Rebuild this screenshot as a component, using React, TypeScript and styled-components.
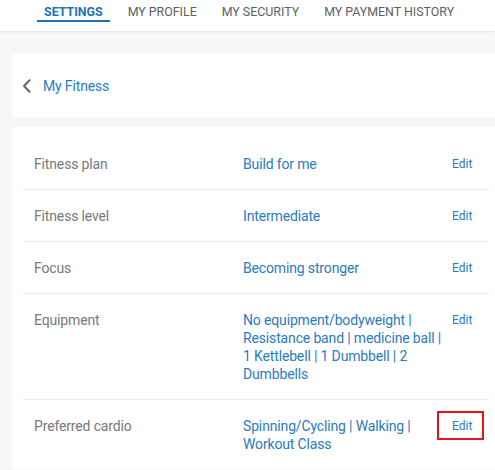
import React from "react";
import styled, { createGlobalStyle } from "styled-components";

const Global = createGlobalStyle`
  html, body { margin: 0; padding: 0; background: #f7f7f7; }
  body { font-family: Roboto, "Liberation Sans", Arial, sans-serif; -webkit-font-smoothing: antialiased; }
  * { box-sizing: border-box; }
`;

const Page = styled.div`
  min-height: 470px;
  background: #f7f7f7;
  overflow: hidden;
`;

const Nav = styled.nav`
  display: flex;
  gap: 11px;
  padding: 4px 0 9px 37px;
  background: #fff;
  border-bottom: 1px solid #e8e8e8;
  box-shadow: 0 1px 2px rgba(0, 0, 0, 0.04);
`;

const Tab = styled.a<{ $active?: boolean }>`
  display: block;
  padding: 0 7px;
  font-size: 12.4px;
  line-height: 16px;
  text-transform: uppercase;
  white-space: nowrap;
  color: ${(p) => (p.$active ? "#1f72b6" : "#5b5f63")};
  font-weight: ${(p) => (p.$active ? 700 : 400)};
  border-bottom: 2px solid ${(p) => (p.$active ? "#1f72b6" : "transparent")};
  cursor: pointer;
`;

const Content = styled.main`
  display: flex;
  flex-direction: column;
  gap: 10px;
  padding: 22px 0 0 12px;
`;

const Card = styled.section<{ $pad?: string }>`
  background: #fff;
  padding: ${(p) => p.$pad || "0"};
`;

const BackBar = styled.div`
  display: flex;
  align-items: center;
  gap: 12px;
  height: 63px;
  padding-left: 10px;
`;

const BackLink = styled.a`
  font-size: 14px;
  letter-spacing: -0.15px;
  color: #2a7bbf;
  cursor: pointer;
`;

const Row = styled.div<{ $last?: boolean }>`
  display: grid;
  grid-template-columns: 209px 209px auto;
  align-items: start;
  padding: 17px 0 16px 11px;
  border-bottom: ${(p) => (p.$last ? "none" : "1px solid #ececec")};
  font-size: 14px;
  letter-spacing: -0.15px;
  line-height: 18px;
`;

const Label = styled.div`
  color: #77797c;
`;

const Value = styled.div`
  color: #2a7bbf;
`;

const EditButton = styled.a<{ $highlight?: boolean }>`
  position: relative;
  justify-self: start;
  font-size: 12px;
  letter-spacing: 0;
  line-height: 18px;
  color: #2a7bbf;
  cursor: pointer;
  &::after {
    content: "";
    position: absolute;
    inset: -6px -12px -5px -15px;
    border: 2px solid ${(p) => (p.$highlight ? "#e8121b" : "transparent")};
    pointer-events: none;
  }
`;

const Chevron = () => (
  <svg width="9" height="14" viewBox="0 0 9 14" fill="none">
    <path d="M7.5 1.2L2 7l5.5 5.8" stroke="#5f6770" strokeWidth="2" strokeLinecap="round" strokeLinejoin="round" />
  </svg>
);

const rows = [
  { label: "Fitness plan", value: "Build for me" },
  { label: "Fitness level", value: "Intermediate" },
  { label: "Focus", value: "Becoming stronger" },
  {
    label: "Equipment",
    value: "No equipment/bodyweight | Resistance band | medicine ball | 1 Kettlebell | 1 Dumbbell | 2 Dumbbells",
  },
  { label: "Preferred cardio", value: "Spinning/Cycling | Walking | Workout Class", highlight: true },
];

export default function App() {
  return (
    <Page>
      <Global />
      <Nav>
        <Tab $active>Settings</Tab>
        <Tab>My Profile</Tab>
        <Tab>My Security</Tab>
        <Tab>My Payment History</Tab>
      </Nav>
      <Content>
        <Card>
          <BackBar>
            <Chevron />
            <BackLink>My Fitness</BackLink>
          </BackBar>
        </Card>
        <Card $pad="11px 6px 0 11px">
          {rows.map((r, i) => (
            <Row key={r.label} $last={i === rows.length - 1}>
              <Label>{r.label}</Label>
              <Value>{r.value}</Value>
              <EditButton $highlight={r.highlight}>Edit</EditButton>
            </Row>
          ))}
        </Card>
      </Content>
    </Page>
  );
}
